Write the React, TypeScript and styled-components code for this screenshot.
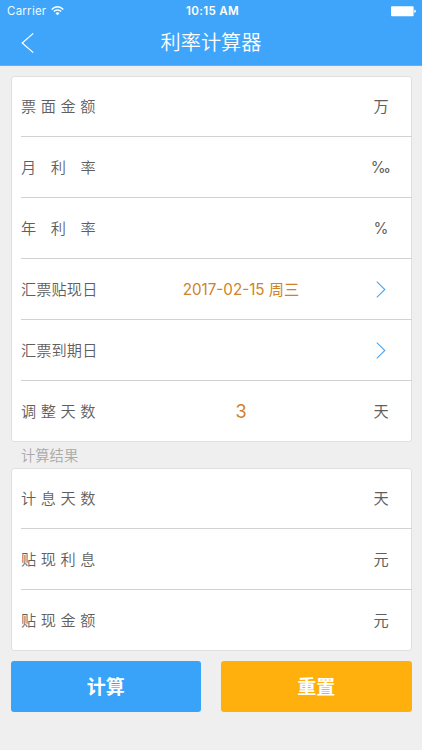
import React from 'react';
import styled, { createGlobalStyle } from 'styled-components';

const GlobalStyle = createGlobalStyle`
  * { box-sizing: border-box; }
  body {
    margin: 0;
    background: #efefef;
    font-family: Inter, "Noto Sans CJK SC", sans-serif;
  }
`;

const Screen = styled.div`
  width: 422px;
  height: 750px;
  display: flex;
  flex-direction: column;
  background: #efefef;
  overflow: hidden;
`;

const Header = styled.header`
  height: 66px;
  flex: none;
  background: #3fa5fa;
  border-bottom: 1px solid #5fb1f6;
  color: #fff;
`;

const StatusBar = styled.div`
  height: 22px;
  display: grid;
  grid-template-columns: 1fr auto 1fr;
  align-items: center;
  padding: 0 6px 0 7px;
  font-size: 11.5px;
  line-height: 22px;
`;

const Carrier = styled.div`
  display: flex;
  align-items: center;
  gap: 5px;
  letter-spacing: 0.25px;
  color: #f0f8ff;
`;

const Clock = styled.div`
  font-weight: 600;
  font-size: 11.6px;
  letter-spacing: 0.3px;
  padding-left: 2px;
`;

const BatterySlot = styled.div`
  display: flex;
  justify-content: flex-end;
`;

const NavBar = styled.div`
  height: 43px;
  display: grid;
  grid-template-columns: 60px 1fr 60px;
  align-items: center;
`;

const BackButton = styled.button`
  border: 0;
  background: none;
  padding: 0 0 2px 21px;
  height: 43px;
  display: flex;
  align-items: center;
`;

const Title = styled.h1`
  margin: 0;
  padding-bottom: 3px;
  text-align: center;
  font: 350 20.2px/40px "Noto Sans CJK SC", sans-serif;
`;

const Card = styled.section`
  width: 401px;
  margin-left: 11px;
  flex: none;
  background: #fff;
  border: 1px solid #e0e0e0;
  border-radius: 3px;
`;

const Row = styled.div`
  height: 61px;
  margin-left: 9px;
  margin-right: -1px;
  display: grid;
  grid-template-columns: 110px 1fr 60px;
  align-items: center;
  padding-right: 1px;
  border-bottom: 1px solid #d2d2d2;
  color: #5f5f5f;
  &:first-child { height: 60px; padding-bottom: 1px; }
  &:last-child { height: 60px; border-bottom: 0; }
`;

const Label = styled.span<{ $spacing: number }>`
  font: 350 15.2px/22px "Noto Sans CJK SC", sans-serif;
  letter-spacing: ${(p) => p.$spacing}px;
  white-space: nowrap;
  padding-bottom: 2px;
`;

const Value = styled.span<{ $size: number }>`
  font-size: ${(p) => p.$size}px;
  line-height: 22px;
  font-weight: 380;
  text-align: center;
  color: #cf8229;
  padding-top: 2px;
`;

const Unit = styled.span`
  display: flex;
  justify-content: center;
  font-size: 15.2px;
  line-height: 22px;
  font-weight: 380;
  padding-top: 1px;
`;

const SectionTitle = styled.h2`
  height: 26px;
  margin: 0;
  padding-left: 21px;
  font: 350 14.3px/25px "Noto Sans CJK SC", sans-serif;
  color: #aaa;
`;

const Main = styled.main`
  padding-top: 10px;
`;

const Actions = styled.div`
  display: grid;
  grid-template-columns: 1fr 1fr;
  gap: 20px;
  padding: 10px 10.5px 0;
`;

const ActionButton = styled.button<{ $color: string }>`
  height: 51px;
  padding: 0 0 2px;
  border: 0;
  border-radius: 3px;
  background: ${(p) => p.$color};
  color: #fff;
  font: 700 19px/49px "Noto Sans CJK SC", sans-serif;
`;

const WifiIcon = () => (
  <svg width="13" height="10" viewBox="0 0 13 10" fill="none" stroke="#fff" strokeWidth="1.4">
    <path d="M.7 3.5C4-.2 9-.2 12.3 3.5M2.8 5.6c2.1-2.2 5.3-2.2 7.4 0" />
    <path d="M4.5 7.2c1.2-1.2 2.8-1.2 4 0l-2 2.1z" fill="#fff" stroke="none" />
  </svg>
);

const BatteryIcon = () => (
  <svg width="25" height="11" viewBox="0 0 25 11" fill="#fff">
    <rect x="0" y="0.2" width="22.6" height="10" rx="1" />
    <path d="M23.3 3.5q1.5.4 1.5 1.7t-1.5 1.7z" />
  </svg>
);

const BackIcon = () => (
  <svg width="13" height="20" viewBox="0 0 13 20" fill="none" stroke="#fff" strokeWidth="1.2">
    <path d="M12.3.4 1.2 10l11.1 9.6" />
  </svg>
);

const ChevronIcon = () => (
  <svg width="10" height="17" viewBox="0 0 10 17" fill="none" stroke="#4aa5ef" strokeWidth="1.1">
    <path d="m.8.6 8 7.9-8 7.9" />
  </svg>
);

interface Field {
  label: string;
  spacing: number;
  value?: string;
  valueSize?: number;
  unit?: string;
}

const inputs: Field[] = [
  { label: '票面金额', spacing: 4.6, unit: '万' },
  { label: '月利率', spacing: 14.5, unit: '‰' },
  { label: '年利率', spacing: 14.5, unit: '%' },
  { label: '汇票贴现日', spacing: 0.1, value: '2017-02-15 周三' },
  { label: '汇票到期日', spacing: 0.1 },
  { label: '调整天数', spacing: 4.6, value: '3', valueSize: 18, unit: '天' },
];

const results: Field[] = [
  { label: '计息天数', spacing: 4.6, unit: '天' },
  { label: '贴现利息', spacing: 4.6, unit: '元' },
  { label: '贴现金额', spacing: 4.6, unit: '元' },
];

const FieldCard = ({ fields }: { fields: Field[] }) => (
  <Card>
    {fields.map((f) => (
      <Row key={f.label}>
        <Label $spacing={f.spacing}>{f.label}</Label>
        <Value $size={f.valueSize ?? 15.2}>{f.value}</Value>
        <Unit>{f.unit ?? <ChevronIcon />}</Unit>
      </Row>
    ))}
  </Card>
);

export default function App() {
  return (
    <Screen>
      <GlobalStyle />
      <Header>
        <StatusBar>
          <Carrier>Carrier<WifiIcon /></Carrier>
          <Clock>10:15 AM</Clock>
          <BatterySlot><BatteryIcon /></BatterySlot>
        </StatusBar>
        <NavBar>
          <BackButton aria-label="返回"><BackIcon /></BackButton>
          <Title>利率计算器</Title>
        </NavBar>
      </Header>
      <Main>
        <FieldCard fields={inputs} />
        <SectionTitle>计算结果</SectionTitle>
        <FieldCard fields={results} />
        <Actions>
          <ActionButton $color="#38a3f8">计算</ActionButton>
          <ActionButton $color="#ffb00c">重置</ActionButton>
        </Actions>
      </Main>
    </Screen>
  );
}
